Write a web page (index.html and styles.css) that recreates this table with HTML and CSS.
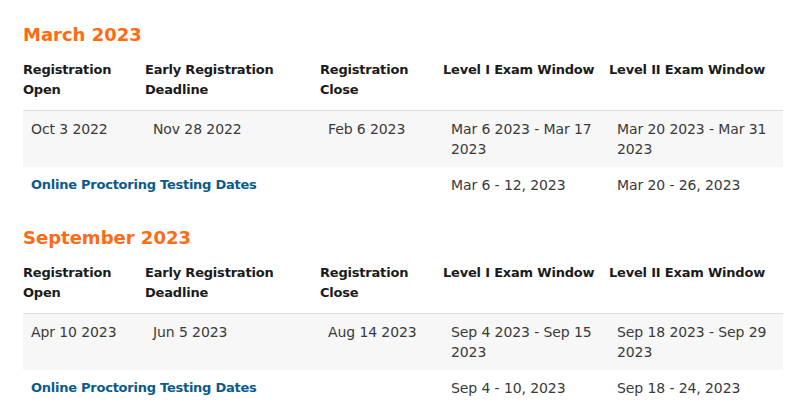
FILE: index.html
```html
<!DOCTYPE html>
<html lang="en">
<head>
<meta charset="utf-8">
<title>Exam dates</title>
<link rel="stylesheet" href="styles.css">
</head>
<body>
<section class="session">
  <h2 class="session-title">March 2023</h2>
  <table class="dates">
    <colgroup>
      <col class="c1"><col class="c2"><col class="c3"><col class="c4"><col class="c5">
    </colgroup>
    <thead>
      <tr>
        <th>Registration Open</th>
        <th>Early Registration Deadline</th>
        <th>Registration Close</th>
        <th>Level I Exam Window</th>
        <th>Level II Exam Window</th>
      </tr>
    </thead>
    <tbody>
      <tr class="main-row">
        <td>Oct 3 2022</td>
        <td>Nov 28 2022</td>
        <td>Feb 6 2023</td>
        <td>Mar 6 2023 - Mar 17 2023</td>
        <td>Mar 20 2023 - Mar 31 2023</td>
      </tr>
      <tr class="online-row">
        <td colspan="3" class="online-label">Online Proctoring Testing Dates</td>
        <td>Mar 6 - 12, 2023</td>
        <td>Mar 20 - 26, 2023</td>
      </tr>
    </tbody>
  </table>
</section>
<section class="session">
  <h2 class="session-title">September 2023</h2>
  <table class="dates">
    <colgroup>
      <col class="c1"><col class="c2"><col class="c3"><col class="c4"><col class="c5">
    </colgroup>
    <thead>
      <tr>
        <th>Registration Open</th>
        <th>Early Registration Deadline</th>
        <th>Registration Close</th>
        <th>Level I Exam Window</th>
        <th>Level II Exam Window</th>
      </tr>
    </thead>
    <tbody>
      <tr class="main-row">
        <td>Apr 10 2023</td>
        <td>Jun 5 2023</td>
        <td>Aug 14 2023</td>
        <td>Sep 4 2023 - Sep 15 2023</td>
        <td>Sep 18 2023 - Sep 29 2023</td>
      </tr>
      <tr class="online-row">
        <td colspan="3" class="online-label">Online Proctoring Testing Dates</td>
        <td>Sep 4 - 10, 2023</td>
        <td>Sep 18 - 24, 2023</td>
      </tr>
    </tbody>
  </table>
</section>
</body>
</html>
```
FILE: styles.css
```css
* { box-sizing: border-box; }
html, body { background: #fff; }
body {
  margin: 0;
  padding: 23px 26px 0 23px;
  font-family: "DejaVu Sans", "Liberation Sans", sans-serif;
  color: #333;
}
.session { width: 760px; }
.session + .session { margin-top: 23px; }
.session-title {
  margin: 0 0 13px;
  font-size: 18px;
  line-height: 24px;
  font-weight: bold;
  color: #ff6a13;
}
.dates {
  width: 760px;
  border-collapse: collapse;
  table-layout: fixed;
}
.c1 { width: 122px; }
.c2 { width: 175px; }
.c3 { width: 123px; }
.c4 { width: 166px; }
.c5 { width: 174px; }
.dates th {
  text-align: left;
  vertical-align: top;
  font-size: 13px;
  line-height: 20px;
  font-weight: bold;
  letter-spacing: -0.2px;
  color: #1b1b1b;
  padding: 0 0 10px 0;
  border-bottom: 1px solid #ddd;
}
.dates td {
  vertical-align: top;
  font-size: 14px;
  line-height: 20px;
  color: #3a3a3a;
  padding: 8px 8px;
  letter-spacing: -0.1px;
}
.main-row td { background: #f7f7f7; }
.dates .online-label {
  color: #0b5a8c;
  font-weight: bold;
  font-size: 13px;
  letter-spacing: -0.25px;
}
```
